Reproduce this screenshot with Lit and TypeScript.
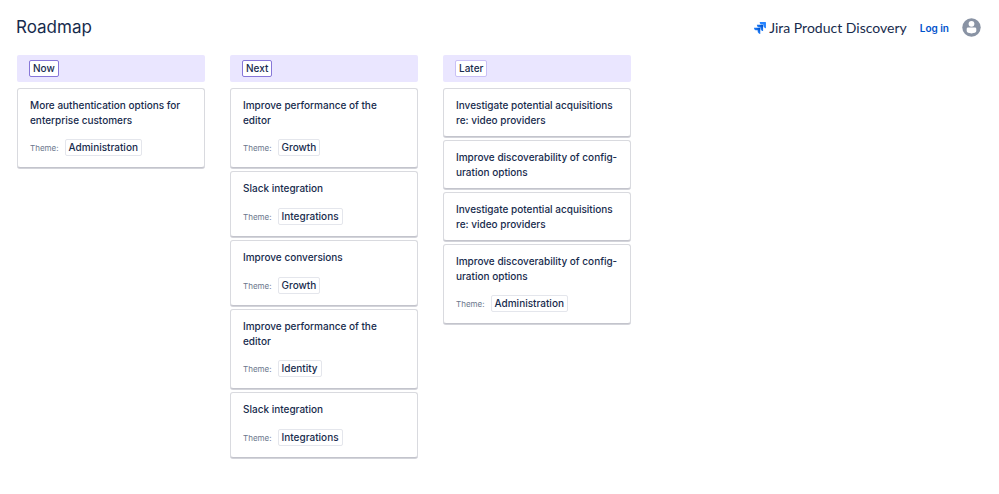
import { LitElement, html, css, svg, nothing } from "lit";
import { customElement, property } from "lit/decorators.js";

interface Idea {
  title: string;
  theme?: string;
}

interface Column {
  name: string;
  tone: "strong" | "soft";
  ideas: Idea[];
}

const columns: Column[] = [
  {
    name: "Now",
    tone: "strong",
    ideas: [
      { title: "More authentication options for enterprise customers", theme: "Administration" },
    ],
  },
  {
    name: "Next",
    tone: "strong",
    ideas: [
      { title: "Improve performance of the editor", theme: "Growth" },
      { title: "Slack integration", theme: "Integrations" },
      { title: "Improve conversions", theme: "Growth" },
      { title: "Improve performance of the editor", theme: "Identity" },
      { title: "Slack integration", theme: "Integrations" },
    ],
  },
  {
    name: "Later",
    tone: "soft",
    ideas: [
      { title: "Investigate potential acquisitions re: video providers" },
      { title: "Improve discoverability of config\u00aduration options" },
      { title: "Investigate potential acquisitions re: video providers" },
      { title: "Improve discoverability of config\u00aduration options", theme: "Administration" },
    ],
  },
];

// One arrow of the Jira mark; the mark repeats it three times along the diagonal.
const arrow = (x: number, y: number, fill: string) => svg`
  <path transform="translate(${x} ${y})" fill=${fill}
    d="M11.5 0H0a5.2 5.2 0 0 0 5.2 5.2h2.1v2c0 2.900 2.300 5.200 5.200 5.200V1a1 1 0 0 0-1-1Z"/>`;

@customElement("idea-card")
export class IdeaCard extends LitElement {
  @property({ attribute: false }) idea!: Idea;

  static styles = css`
    :host {
      display: block;
      box-sizing: border-box;
      padding: 9px 12px 8px;
      border: 1px solid #d9dadf;
      border-bottom-color: #c3c4cc;
      border-radius: 3px;
      background: #fff;
      box-shadow: 0 1px 0 #d3d4da;
    }
    .title {
      margin: 0;
      min-height: 16px;
      font-size: 10px;
      font-weight: 500;
      line-height: 15px;
      hyphens: manual;
    }
    .field {
      display: flex;
      align-items: center;
      gap: 6px;
      margin: 11px 0 3px;
    }
    .label {
      color: #6b778c;
      font-size: 8px;
    }
    .value {
      margin: 0;
      padding: 0 3px;
      border: 1px solid #e4e6ec;
      border-radius: 2px;
      font-size: 10px;
      font-weight: 500;
      line-height: 15px;
    }
  `;

  render() {
    const { title, theme } = this.idea;
    return html`
      <h3 class="title">${title}</h3>
      ${theme
        ? html`<dl class="field"><dt class="label">Theme:</dt><dd class="value">${theme}</dd></dl>`
        : nothing}
    `;
  }
}

@customElement("app-root")
export class AppRoot extends LitElement {
  static styles = css`
    :host {
      display: block;
      min-height: 100vh;
      background: #fff;
      color: #172b4d;
      font-family: Inter, "Liberation Sans", sans-serif;
    }
    .top {
      display: flex;
      align-items: center;
      justify-content: space-between;
      padding: 16px 18px 0 16px;
    }
    .heading {
      margin: 0;
      font-size: 17px;
      font-weight: 400;
      line-height: 23px;
    }
    .account {
      display: flex;
      align-items: center;
      gap: 13px;
    }
    .product {
      display: flex;
      align-items: center;
      gap: 3px;
      font-family: Lato, sans-serif;
      font-size: 14px;
      line-height: 20px;
    }
    .mark {
      width: 12px;
      height: 12px;
    }
    .login {
      color: #0052cc;
      font-size: 10px;
      font-weight: 600;
      text-decoration: none;
    }
    .avatar {
      display: flex;
      padding: 0;
      border: 0;
      background: none;
    }
    .person {
      width: 19px;
      height: 19px;
    }
    .board {
      display: grid;
      grid-template-columns: repeat(3, minmax(0, 188px));
      align-items: start;
      gap: 25px;
      padding: 16px 17px;
    }
    .band {
      display: flex;
      align-items: center;
      height: 27px;
      margin-bottom: 6px;
      padding: 0 12px;
      border-radius: 2px;
      background: #eae6ff;
    }
    .status {
      margin: 0;
      padding: 0 3px;
      border: 1px solid #8777d9;
      border-radius: 2px;
      background: #fff;
      font-size: 10px;
      font-weight: 500;
      line-height: 15px;
    }
    .soft {
      border-color: #c9c0f5;
    }
    .ideas {
      display: grid;
      gap: 3px;
      margin: 0;
      padding: 0;
      list-style: none;
    }
  `;

  render() {
    return html`
      <header class="top">
        <h1 class="heading">Roadmap</h1>
        <div class="account">
          <div class="product">
            <svg class="mark" viewBox="0 0 24 24" aria-hidden="true">
              <defs>
                <linearGradient id="fade" x1="1" y1="0" x2="0.4" y2="0.6">
                  <stop offset="0.2" stop-color="#0052cc" />
                  <stop offset="1" stop-color="#2684ff" />
                </linearGradient>
              </defs>
              ${arrow(0, 11.4, "url(#fade)")} ${arrow(5.7, 5.7, "url(#fade)")} ${arrow(11.4, 0, "#2684ff")}
            </svg>
            <span>Jira Product Discovery</span>
          </div>
          <a class="login" href="#login">Log in</a>
          <button class="avatar" type="button" aria-label="Account">
            <svg class="person" viewBox="0 0 19 19" aria-hidden="true">
              <circle cx="9.5" cy="9.5" r="9.2" fill="#8993a4" />
              <circle cx="9.5" cy="5.8" r="2.9" fill="#fff" />
              <path d="M4.700 10.900c0-.8.6-1.400 1.400-1.400h6.800c.8 0 1.400.6 1.400 1.400v2.200c0 1.300-2.100 2.300-4.800 2.300s-4.800-1-4.800-2.300Z" fill="#fff" />
            </svg>
          </button>
        </div>
      </header>
      <main class="board">
        ${columns.map(
          (column) => html`
            <section>
              <div class="band">
                <h2 class="status ${column.tone}">${column.name}</h2>
              </div>
              <ul class="ideas">
                ${column.ideas.map((idea) => html`<li><idea-card .idea=${idea}></idea-card></li>`)}
              </ul>
            </section>
          `,
        )}
      </main>
    `;
  }
}
